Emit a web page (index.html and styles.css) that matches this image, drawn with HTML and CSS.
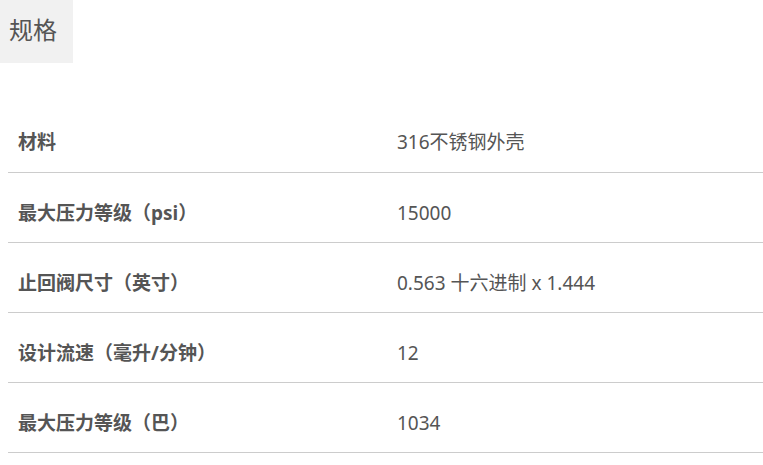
FILE: index.html
```html
<!DOCTYPE html>
<html lang="zh">
<head>
<meta charset="utf-8">
<link rel="stylesheet" href="styles.css">
</head>
<body>
<div class="tabs"><div class="tab">规格</div></div>
<table class="specs">
<tr><th>材料</th><td>316不锈钢外壳</td></tr>
<tr><th>最大压力等级（psi）</th><td>15000</td></tr>
<tr><th>止回阀尺寸（英寸）</th><td>0.563 十六进制 x 1.444</td></tr>
<tr><th>设计流速（毫升/分钟）</th><td>12</td></tr>
<tr><th>最大压力等级（巴）</th><td>1034</td></tr>
</table>
</body>
</html>
```
FILE: styles.css
```css
html, body { margin: 0; padding: 0; background: #fff; }
body {
  font-family: "Noto Sans", "Noto Sans CJK SC", sans-serif;
  color: #555;
}
.tabs { display: flex; }
.tab {
  background: #f1f1f1;
  width: 73px;
  height: 63px;
  box-sizing: border-box;
  padding-left: 9px;
  line-height: 60px;
  font-size: 24px;
  color: #555;
}
.specs {
  margin: 39px 0 0 8px;
  width: 755px;
  border-collapse: collapse;
  font-size: 19px;
}
.specs tr { border-bottom: 1px solid #ccc; height: 70px; }
.specs th, .specs td {
  height: 70px;
  box-sizing: border-box;
  padding-top: 11px;
  padding-bottom: 0;
  line-height: 24px;
}
.specs th {
  text-align: left;
  font-weight: bold;
  width: 379px;
  padding-left: 10px;
  padding-right: 0;
  color: #555;
}
.specs td { padding-left: 10px; padding-right: 10px; color: #555; }
```
